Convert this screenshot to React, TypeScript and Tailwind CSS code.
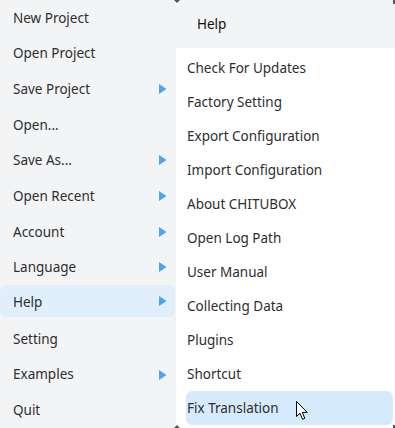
import React from 'react';

const leftItems: { label: string; sub?: boolean; active?: boolean }[] = [
  { label: 'New Project' },
  { label: 'Open Project' },
  { label: 'Save Project', sub: true },
  { label: 'Open...' },
  { label: 'Save As...', sub: true },
  { label: 'Open Recent', sub: true },
  { label: 'Account', sub: true },
  { label: 'Language', sub: true },
  { label: 'Help', sub: true, active: true },
  { label: 'Setting' },
  { label: 'Examples', sub: true },
  { label: 'Quit' },
];

const helpItems = [
  'Check For Updates',
  'Factory Setting',
  'Export Configuration',
  'Import Configuration',
  'About CHITUBOX',
  'Open Log Path',
  'User Manual',
  'Collecting Data',
  'Plugins',
  'Shortcut',
  'Fix Translation',
];

function Arrow() {
  return (
    <svg width="8" height="10" viewBox="0 0 8 10" className="absolute left-[159px] top-1/2 -translate-y-1/2">
      <path d="M0 0 L7.5 5 L0 10 Z" fill="#4ba4ee" />
    </svg>
  );
}

function Cursor() {
  return (
    <svg width="13" height="20" viewBox="0 0 13 20" className="absolute left-[296px] top-[401px]">
      <path
        d="M0.5 0.5 L0.5 15.5 L4 12.2 L6.6 18.3 L8.8 17.3 L6.3 11.4 L11.2 11.4 Z"
        fill="#ffffff"
        stroke="#000000"
        strokeWidth="1"
        strokeLinejoin="miter"
      />
    </svg>
  );
}

export default function App() {
  return (
    <div
      className="relative w-[395px] h-[428px] overflow-hidden bg-[#f3f4f6] flex text-[13.5px] text-[#2e2e2e]"
      style={{ fontFamily: '"Segoe UI", "Noto Sans", sans-serif' }}
    >
      <div className="w-[176px] shrink-0 flex flex-col">
        {leftItems.map((it) =>
          it.active ? (
            <div key={it.label} className="h-9 pb-1">
              <div className="relative h-8 w-[175px] rounded-md bg-[#e1eefc] flex items-center pl-[13px] pt-[2px]">
                {it.label}
                {it.sub && <Arrow />}
              </div>
            </div>
          ) : (
            <div key={it.label} className="relative h-9 flex items-center pl-[13px]">
              {it.label}
              {it.sub && <Arrow />}
            </div>
          )
        )}
      </div>

      <div className="flex-1 flex flex-col">
        <div className="h-12 shrink-0 flex items-center pl-[21px] text-[#111111]">Help</div>
        <div className="flex-1 bg-white pl-[10px] pr-[2px] pt-[3px] flex flex-col">
          {helpItems.map((h, i) => (
            <div
              key={h}
              className={
                i === helpItems.length - 1
                  ? 'h-[34px] shrink-0 flex items-center pl-px rounded-md bg-[#d5eafc]'
                  : 'h-[34px] shrink-0 flex items-center pl-px'
              }
            >
              {h}
            </div>
          ))}
        </div>
      </div>

      <div className="absolute left-[174px] top-0 w-0 h-0 border-l-[3px] border-r-[3px] border-t-[3px] border-l-transparent border-r-transparent border-t-[#555555]" />
      <div className="absolute left-[174px] bottom-0 w-0 h-0 border-l-[3px] border-r-[3px] border-b-[3px] border-l-transparent border-r-transparent border-b-[#555555]" />
      <div className="absolute right-0 top-0 w-[2px] h-[4px] bg-[#555555]" />
      <div className="absolute right-0 bottom-0 w-[2px] h-[3px] bg-[#555555]" />
      <Cursor />
    </div>
  );
}
